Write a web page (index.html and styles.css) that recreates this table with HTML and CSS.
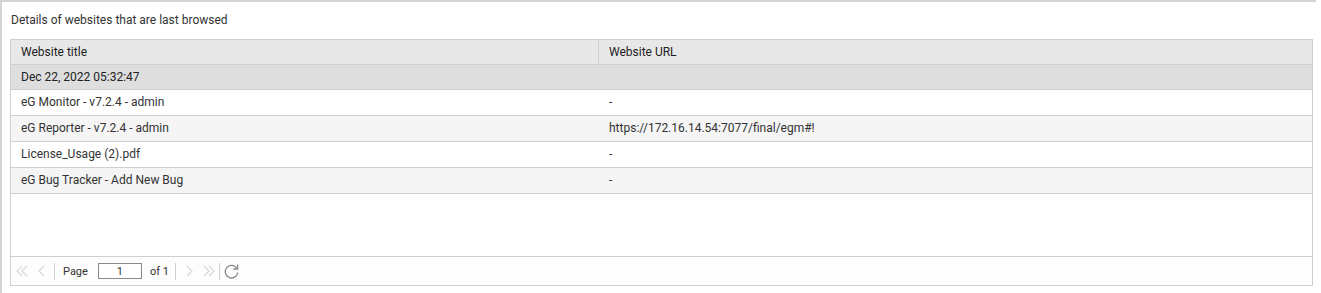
FILE: index.html
```html
<!DOCTYPE html>
<html lang="en">
<head>
    <meta charset="UTF-8">
    <title>Browsed websites</title>
    <link rel="stylesheet" href="styles.css">
</head>
<body>
    <div class="panel">
        <p class="caption">Details of websites that are last browsed</p>

        <div class="grid">
            <div class="grid-head">
                <div class="cell col-title">Website title</div>
                <div class="cell col-url">Website URL</div>
            </div>
            <div class="grid-body">
                <div class="group-row">Dec 22, 2022 05:32:47</div>
                <div class="row">
                    <div class="cell col-title">eG Monitor - v7.2.4 - admin</div>
                    <div class="cell col-url">-</div>
                </div>
                <div class="row alt">
                    <div class="cell col-title">eG Reporter - v7.2.4 - admin</div>
                    <div class="cell col-url">https://172.16.14.54:7077/final/egm#!</div>
                </div>
                <div class="row">
                    <div class="cell col-title">License_Usage (2).pdf</div>
                    <div class="cell col-url">-</div>
                </div>
                <div class="row alt">
                    <div class="cell col-title">eG Bug Tracker - Add New Bug</div>
                    <div class="cell col-url">-</div>
                </div>
            </div>

            <!-- paging toolbar -->
            <div class="pager">
                <svg class="pg-btn" width="20" height="14" viewBox="0 0 20 14">
                    <polyline points="10,2 5,7 10,12" fill="none" stroke="#d8d8d8" stroke-width="1.2"/>
                    <polyline points="15,2 10,7 15,12" fill="none" stroke="#d8d8d8" stroke-width="1.2"/>
                </svg>
                <svg class="pg-btn" width="20" height="14" viewBox="0 0 20 14">
                    <polyline points="12,2 7,7 12,12" fill="none" stroke="#d8d8d8" stroke-width="1.2"/>
                </svg>
                <span class="pg-sep"></span>
                <span class="pg-text">Page</span>
                <input class="pg-input" type="text" value="1">
                <span class="pg-text">of 1</span>
                <span class="pg-sep sep-right"></span>
                <svg class="pg-btn" width="20" height="14" viewBox="0 0 20 14">
                    <polyline points="8,2 13,7 8,12" fill="none" stroke="#d8d8d8" stroke-width="1.2"/>
                </svg>
                <svg class="pg-btn" width="20" height="14" viewBox="0 0 20 14">
                    <polyline points="5,2 10,7 5,12" fill="none" stroke="#d8d8d8" stroke-width="1.2"/>
                    <polyline points="10,2 15,7 10,12" fill="none" stroke="#d8d8d8" stroke-width="1.2"/>
                </svg>
                <span class="pg-sep sep-last"></span>
                <svg class="pg-refresh" width="17" height="17" viewBox="0 0 17 17">
                    <path d="M14 5.5 A6.3 6.3 0 1 0 14.8 9.5" fill="none" stroke="#8a8a8a" stroke-width="1.3"/>
                    <path d="M14.6 1.5 L14.6 6 L10.2 6" fill="none" stroke="#8a8a8a" stroke-width="1.3"/>
                </svg>
            </div>
        </div>
    </div>
</body>
</html>
```

FILE: styles.css
```css
body {
    margin: 0;
    font-family: Roboto, 'Liberation Sans', sans-serif;
    font-size: 12px;
    color: #333;
    background-color: #ffffff;
}

.panel {
    width: 1306px;
    height: 291px;
    border-top: 2px solid #d4d4d4;
    border-left: 2px solid #d4d4d4;
    padding: 0 0 0 8px;
}

.caption {
    margin: 0;
    padding: 11px 0 0 1px;
    height: 26px;
    line-height: 14px;
    color: #333;
}

.grid {
    width: 1301px;
    height: 245px;
    border: 1px solid #d0d0d0;
    display: flex;
    flex-direction: column;
}

.grid-head {
    display: flex;
    height: 24px;
    background-color: #e8e8e8;
    border-bottom: 1px solid #d0d0d0;
    color: #222;
}

.grid-head .cell {
    line-height: 24px;
}

.grid-head .col-title {
    border-right: 1px solid #d0d0d0;
}

.cell {
    padding: 0 10px;
    white-space: nowrap;
}

.col-title {
    width: 567px;
}

.col-url {
    flex: 1;
}

.grid-body {
    flex: 1;
}

.group-row {
    height: 24px;
    line-height: 24px;
    padding: 0 10px;
    background-color: #dedede;
    border-bottom: 1px solid #d0d0d0;
    color: #222;
}

.row {
    display: flex;
    height: 25px;
    line-height: 25px;
    border-bottom: 1px solid #d0d0d0;
    background-color: #fff;
}

.row .col-title {
    width: 568px;
}

.row.alt {
    background-color: #f5f5f5;
}

.pager {
    display: flex;
    align-items: center;
    height: 28px;
    border-top: 1px solid #d0d0d0;
    padding-left: 1px;
    background-color: #fdfdfd;
}

.pg-btn {
    display: block;
}

.pg-sep {
    width: 1px;
    height: 17px;
    background-color: #d0d0d0;
    margin: 0 8px 0 2px;
}

.pg-sep.sep-right {
    margin: 0 3px 0 6px;
}

.pg-sep.sep-last {
    margin: 0 3px 0 0;
}

.pg-text {
    font-size: 11px;
    color: #333;
}

.pg-input {
    width: 42px;
    height: 14px;
    padding: 0;
    margin: 0 8px 0 10px;
    border: 1px solid #8a8a8a;
    font-family: Roboto, 'Liberation Sans', sans-serif;
    font-size: 11px;
    text-align: center;
    color: #333;
}

.pg-refresh {
    display: block;
}
```
